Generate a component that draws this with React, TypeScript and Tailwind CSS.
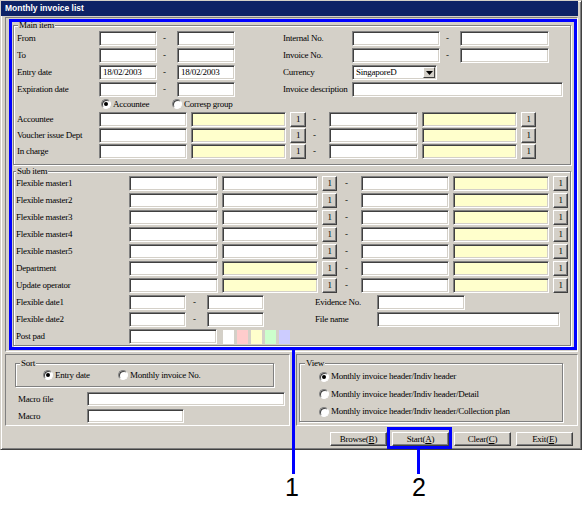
import type { ReactNode } from "react";

interface FieldProps {
    w: string;
    h?: string;
    yellow?: boolean;
    text?: string;
    className?: string;
}

// sunken win2k text box
function Field({ w, h = "h-[15px]", yellow, text, className = "" }: FieldProps) {
    return (
        <div
            className={`${w} ${h} shrink-0 flex items-center pl-[3px] border border-t-[#808080] border-l-[#808080] border-r-white border-b-white shadow-[inset_1px_1px_0_#404040,inset_-1px_-1px_0_#d4d0c8] ${yellow ? "bg-[#ffffcc]" : "bg-white"} ${className}`}
        >
            {text}
        </div>
    );
}

function PickButton({ w = "w-[16px]", className = "" }: { w?: string; className?: string }) {
    return (
        <div
            className={`${w} h-[15px] shrink-0 flex items-center justify-center bg-[#d4d0c8] border border-t-white border-l-white border-r-[#404040] border-b-[#404040] shadow-[inset_-1px_-1px_0_#808080] ${className}`}
        >
            1
        </div>
    );
}

function Dash({ w, pl }: { w: string; pl: string }) {
    return <div className={`${w} ${pl} shrink-0`}>-</div>;
}

function Radio({ checked }: { checked?: boolean }) {
    return (
        <span className="w-[10px] h-[10px] shrink-0 rounded-full bg-white border border-t-[#808080] border-l-[#808080] border-r-white border-b-white shadow-[inset_1px_1px_0_#404040] flex items-center justify-center">
            {checked && <span className="w-[4px] h-[4px] rounded-full bg-black" />}
        </span>
    );
}

function Group({
    label,
    labelLeft,
    className,
    children,
}: {
    label: string;
    labelLeft: string;
    className: string;
    children: ReactNode;
}) {
    return (
        <div className={`relative shrink-0 border border-[#808080] shadow-[inset_1px_1px_0_#fff,1px_1px_0_#fff] ${className}`}>
            <span className={`absolute ${labelLeft} -top-[6px] h-[10px] leading-[10px] px-[1px] bg-[#d4d0c8]`}>
                {label}
            </span>
            {children}
        </div>
    );
}

function WinButton({ label, hot }: { label: string; hot: string }) {
    return (
        <div className="w-[57px] h-[14px] shrink-0 flex items-center justify-center bg-[#d4d0c8] border border-t-white border-l-white border-r-[#404040] border-b-[#404040] shadow-[inset_-1px_-1px_0_#808080]">
            {label}(<span className="underline">{hot}</span>)
        </div>
    );
}

const subRows = [
    { label: "Flexible master1", yellow: false },
    { label: "Flexible master2", yellow: false },
    { label: "Flexible master3", yellow: false },
    { label: "Flexible master4", yellow: false },
    { label: "Flexible master5", yellow: false },
    { label: "Department", yellow: true },
    { label: "Update operator", yellow: true },
];

const swatches = ["bg-white", "bg-[#ffcccc]", "bg-[#ffffcc]", "bg-[#ccffcc]", "bg-[#ccccff]"];

export default function App() {
    return (
        <div className="relative w-[587px] h-[505px] bg-white overflow-hidden font-['Liberation_Serif',serif] text-[9px] tracking-[-0.25px] leading-none text-black">
            {/* Window */}
            <div className="w-[582px] h-[450px] bg-[#d4d0c8] border border-t-[#d4d0c8] border-l-[#d4d0c8] border-r-[#404040] border-b-[#404040] shadow-[inset_1px_1px_0_#fff,inset_-1px_-1px_0_#808080] flex flex-col">
                {/* Title bar */}
                <div className="h-[15px] mr-[3px] shrink-0 flex items-center pl-[4px] bg-[#0d2266] font-['Liberation_Sans',sans-serif] font-bold text-[8.5px] tracking-normal text-white">
                    Monthly invoice list
                </div>

                {/* Main panel */}
                <div className="mt-[1px] ml-[4px] w-[573px] h-[335px] shrink-0 flex flex-col border border-t-[#808080] border-l-[#808080] border-r-white border-b-white">
                    {/* Main item */}
                    <Group label="Main item" labelLeft="left-[4px]" className="mt-[7px] ml-[7px] w-[558px] h-[140px]">
                        <div className="flex flex-col pt-[5px] gap-[2px]">
                            <div className="flex items-center h-[15px]">
                                <div className="w-[85px] pl-[3px] shrink-0">From</div>
                                <Field w="w-[58px]" />
                                <Dash w="w-[20px]" pl="pl-[6px]" />
                                <Field w="w-[58px]" />
                                <div className="w-[48px] shrink-0" />
                                <div className="w-[69px] shrink-0">Internal No.</div>
                                <Field w="w-[88px]" />
                                <Dash w="w-[20px]" pl="pl-[6px]" />
                                <Field w="w-[89px]" />
                            </div>
                            <div className="flex items-center h-[15px]">
                                <div className="w-[85px] pl-[3px] shrink-0">To</div>
                                <Field w="w-[58px]" />
                                <Dash w="w-[20px]" pl="pl-[6px]" />
                                <Field w="w-[58px]" />
                                <div className="w-[48px] shrink-0" />
                                <div className="w-[69px] shrink-0">Invoice No.</div>
                                <Field w="w-[88px]" />
                                <Dash w="w-[20px]" pl="pl-[6px]" />
                                <Field w="w-[89px]" />
                            </div>
                            <div className="flex items-center h-[15px]">
                                <div className="w-[85px] pl-[3px] shrink-0">Entry date</div>
                                <Field w="w-[58px]" text="18/02/2003" />
                                <Dash w="w-[20px]" pl="pl-[6px]" />
                                <Field w="w-[58px]" text="18/02/2003" />
                                <div className="w-[48px] shrink-0" />
                                <div className="w-[69px] shrink-0">Currency</div>
                                <div className="w-[85px] h-[15px] shrink-0 flex items-center justify-between pl-[3px] pr-[1px] bg-white border border-t-[#808080] border-l-[#808080] border-r-white border-b-white shadow-[inset_1px_1px_0_#404040,inset_-1px_-1px_0_#d4d0c8]">
                                    <span>SingaporeD</span>
                                    <span className="w-[12px] h-[11px] flex items-center justify-center bg-[#d4d0c8] border border-t-white border-l-white border-r-[#404040] border-b-[#404040]">
                                        <svg width="7" height="4" viewBox="0 0 7 4">
                                            <path d="M0 0h7L3.5 4z" fill="#000" />
                                        </svg>
                                    </span>
                                </div>
                            </div>
                            <div className="flex items-center h-[15px]">
                                <div className="w-[85px] pl-[3px] shrink-0">Expiration date</div>
                                <Field w="w-[58px]" />
                                <Dash w="w-[20px]" pl="pl-[6px]" />
                                <Field w="w-[58px]" />
                                <div className="w-[48px] shrink-0" />
                                <div className="w-[69px] shrink-0 whitespace-nowrap">Invoice description</div>
                                <Field w="w-[211px]" />
                            </div>
                        </div>

                        {/* Accountee / Corresp group */}
                        <div className="flex items-center h-[14px] pl-[87px]">
                            <div className="w-[71px] flex items-center gap-[2px] shrink-0">
                                <Radio checked />
                                <span>Accountee</span>
                            </div>
                            <div className="flex items-center gap-[2px]">
                                <Radio />
                                <span>Corresp group</span>
                            </div>
                        </div>

                        <div className="flex flex-col mt-[1px] gap-[1px]">
                            {["Accountee", "Voucher issue Dept", "In charge"].map((label) => (
                                <div key={label} className="flex items-center h-[15px]">
                                    <div className="w-[85px] pl-[3px] shrink-0 whitespace-nowrap">{label}</div>
                                    <Field w="w-[88px]" />
                                    <Field w="w-[95px]" yellow className="ml-[4px]" />
                                    <PickButton className="ml-[4px]" />
                                    <Dash w="w-[23px]" pl="pl-[7px]" />
                                    <Field w="w-[89px]" />
                                    <Field w="w-[95px]" yellow className="ml-[4px]" />
                                    <PickButton w="w-[15px]" className="ml-[4px]" />
                                </div>
                            ))}
                        </div>
                    </Group>

                    {/* Sub item */}
                    <Group label="Sub item" labelLeft="left-[2px]" className="mt-[6px] ml-[7px] w-[558px] h-[175px]">
                        <div className="flex flex-col pt-[4px] gap-[2px]">
                            {subRows.map((row) => (
                                <div key={row.label} className="flex items-center h-[15px]">
                                    <div className="w-[115px] pl-[2px] shrink-0">{row.label}</div>
                                    <Field w="w-[89px]" />
                                    <Field w="w-[96px]" yellow={row.yellow} className="ml-[4px]" />
                                    <PickButton w="w-[15px]" className="ml-[4px]" />
                                    <Dash w="w-[24px]" pl="pl-[8px]" />
                                    <Field w="w-[88px]" />
                                    <Field w="w-[96px]" yellow className="ml-[4px]" />
                                    <PickButton w="w-[15px]" className="ml-[4px]" />
                                </div>
                            ))}
                            <div className="flex items-center h-[15px]">
                                <div className="w-[115px] pl-[2px] shrink-0">Flexible date1</div>
                                <Field w="w-[57px]" />
                                <Dash w="w-[21px]" pl="pl-[7px]" />
                                <Field w="w-[57px]" />
                                <div className="w-[51px] shrink-0" />
                                <div className="w-[62px] shrink-0">Evidence No.</div>
                                <Field w="w-[88px]" />
                            </div>
                            <div className="flex items-center h-[15px]">
                                <div className="w-[115px] pl-[2px] shrink-0">Flexible date2</div>
                                <Field w="w-[57px]" />
                                <Dash w="w-[21px]" pl="pl-[7px]" />
                                <Field w="w-[57px]" />
                                <div className="w-[51px] shrink-0" />
                                <div className="w-[62px] shrink-0">File name</div>
                                <Field w="w-[183px]" />
                            </div>
                            <div className="flex items-center h-[15px]">
                                <div className="w-[115px] pl-[2px] shrink-0">Post pad</div>
                                <Field w="w-[88px]" />
                                <div className="flex gap-[3px] ml-[6px]">
                                    {swatches.map((c) => (
                                        <div key={c} className={`w-[11px] h-[14px] ${c}`} />
                                    ))}
                                </div>
                            </div>
                        </div>
                    </Group>
                </div>

                {/* Lower panels */}
                <div className="flex mt-[2px] shrink-0">
                    <div className="ml-[4px] w-[285px] h-[72px] flex flex-col border border-t-[#808080] border-l-[#808080] border-r-white border-b-white">
                        <Group label="Sort" labelLeft="left-[4px]" className="mt-[8px] ml-[9px] w-[259px] h-[24px]">
                            <div className="flex items-center h-full pl-[27px]">
                                <div className="w-[75px] flex items-center gap-[2px] shrink-0">
                                    <Radio checked />
                                    <span>Entry date</span>
                                </div>
                                <div className="flex items-center gap-[2px]">
                                    <Radio />
                                    <span>Monthly invoice No.</span>
                                </div>
                            </div>
                        </Group>
                        <div className="flex items-center mt-[5px] h-[14px]">
                            <div className="w-[81px] pl-[12px] shrink-0">Macro file</div>
                            <Field w="w-[198px]" h="h-[14px]" />
                        </div>
                        <div className="flex items-center mt-[3px] h-[14px]">
                            <div className="w-[81px] pl-[12px] shrink-0">Macro</div>
                            <Field w="w-[97px]" h="h-[14px]" />
                        </div>
                    </div>

                    <div className="ml-[6px] w-[282px] h-[72px] flex flex-col border border-t-[#808080] border-l-[#808080] border-r-white border-b-white">
                        <Group label="View" labelLeft="left-[5px]" className="mt-[8px] ml-[2px] w-[264px] h-[59px]">
                            <div className="flex flex-col pt-[4px] pl-[19px]">
                                {[
                                    "Monthly invoice header/Indiv header",
                                    "Monthly invoice header/Indiv header/Detail",
                                    "Monthly invoice header/Indiv header/Collection plan",
                                ].map((label, i) => (
                                    <div key={label} className="flex items-center gap-[2px] h-[17.5px]">
                                        <Radio checked={i === 0} />
                                        <span>{label}</span>
                                    </div>
                                ))}
                            </div>
                        </Group>
                    </div>
                </div>

                {/* Buttons */}
                <div className="flex justify-end gap-[5px] mt-[6px] pr-[8px] shrink-0">
                    <WinButton label="Browse" hot="B" />
                    <WinButton label="Start" hot="A" />
                    <WinButton label="Clear" hot="C" />
                    <WinButton label="Exit" hot="E" />
                </div>
            </div>

            {/* Annotations */}
            <div className="absolute left-[9px] top-[19px] w-[568px] h-[331px] border-[3px] border-[#0000ff]" />
            <div className="absolute left-[292px] top-[350px] w-[3px] h-[124px] bg-[#0000ff]" />
            <div className="absolute left-[387px] top-[427px] w-[65px] h-[22px] border-[3px] border-[#0000ff]" />
            <div className="absolute left-[417px] top-[449px] w-[3px] h-[25px] bg-[#0000ff]" />
            <div className="absolute left-[285px] top-[475px] font-['Liberation_Sans',sans-serif] text-[25px] leading-[25px] tracking-normal">
                1
            </div>
            <div className="absolute left-[412px] top-[475px] font-['Liberation_Sans',sans-serif] text-[25px] leading-[25px] tracking-normal">
                2
            </div>
        </div>
    );
}
